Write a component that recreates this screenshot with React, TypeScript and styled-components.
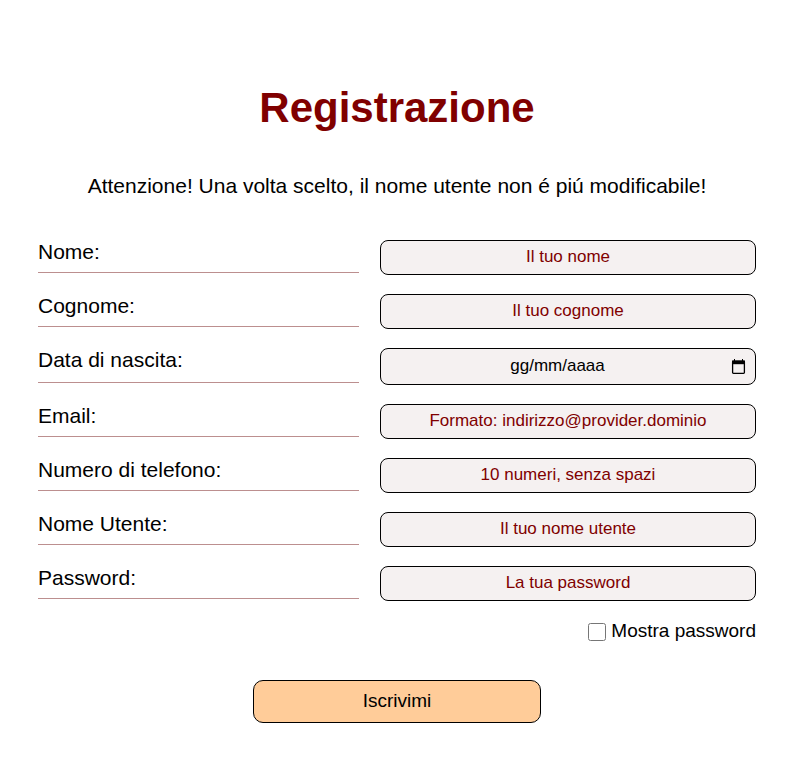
import React, { useState } from "react";
import styled, { createGlobalStyle, css } from "styled-components";

const GlobalStyle = createGlobalStyle`
  *, *::before, *::after {
    box-sizing: border-box;
  }

  body {
    margin: 0;
    background: #ffffff;
    color: #000000;
    font-family: "Liberation Sans", Arial, sans-serif;
    font-size: 21px;
    line-height: 24px;
  }
`;

const Page = styled.main`
  padding: 84px 34px 48px 38px;
`;

const Title = styled.h1`
  margin: 0;
  color: #800000;
  font-size: 42px;
  line-height: 48px;
  text-align: center;
`;

const Notice = styled.p`
  margin: 42px 0 0;
  text-align: center;
`;

const Form = styled.form`
  display: flex;
  flex-direction: column;
  margin-top: 42px;
`;

const Fields = styled.div`
  display: flex;
  flex-direction: column;
  gap: 19px;
`;

const Row = styled.div`
  display: grid;
  grid-template-columns: 321fr 376fr;
  column-gap: 21px;
`;

const Label = styled.label`
  margin-bottom: 2px;
  padding-bottom: 8px;
  border-bottom: 1px solid #bc8f8f;
`;

const Box = styled.div<{ $tall?: boolean }>`
  display: flex;
  align-items: center;
  height: ${({ $tall }) => ($tall ? 37 : 35)}px;
  border: 1px solid #000000;
  border-radius: 8px;
  background: #f5f1f1;

  &:focus-within {
    border-color: #800000;
  }
`;

const Input = styled.input<{ $date?: boolean }>`
  flex: 1;
  min-width: 0;
  height: 100%;
  padding: 0 8px 2px;
  border: 0;
  outline: 0;
  background: transparent;
  color: #000000;
  font: inherit;
  font-size: 17px;
  text-align: center;

  &::placeholder {
    color: #800000;
    opacity: 1;
  }

  ${({ $date }) =>
    $date &&
    css`
      padding: 0 0 2px 4px;

      &::placeholder {
        color: #000000;
      }
    `}
`;

const CalendarButton = styled.button`
  display: flex;
  margin-right: 8px;
  padding: 0;
  border: 0;
  background: none;
  color: #000000;
  cursor: pointer;
`;

const ShowPassword = styled.label`
  display: flex;
  align-items: center;
  align-self: flex-end;
  gap: 5px;
  margin-top: 18px;
  font-size: 19px;
`;

const Checkbox = styled.input`
  width: 18px;
  height: 18px;
  margin: 2px 0 0;
`;

const Submit = styled.button`
  align-self: center;
  width: 40%;
  height: 43px;
  margin-top: 37px;
  padding: 0 8px 2px;
  border: 1px solid #000000;
  border-radius: 10px;
  background: #ffcc99;
  color: #000000;
  font: inherit;
  font-size: 19px;
  cursor: pointer;
`;

type Field = { id: string; label: string; hint: string; type: string };

const fields: Field[] = [
  { id: "nome", label: "Nome:", hint: "Il tuo nome", type: "text" },
  { id: "cognome", label: "Cognome:", hint: "Il tuo cognome", type: "text" },
  { id: "nascita", label: "Data di nascita:", hint: "gg/mm/aaaa", type: "date" },
  { id: "email", label: "Email:", hint: "Formato: indirizzo@provider.dominio", type: "email" },
  { id: "telefono", label: "Numero di telefono:", hint: "10 numeri, senza spazi", type: "tel" },
  { id: "utente", label: "Nome Utente:", hint: "Il tuo nome utente", type: "text" },
  { id: "password", label: "Password:", hint: "La tua password", type: "password" },
];

function CalendarIcon() {
  return (
    <svg width="17" height="17" viewBox="0 0 17 17" fill="none" aria-hidden="true">
      <path d="M4.5 1v2M12.5 1v2" stroke="currentColor" strokeWidth="1" />
      <path d="M2 2.6h13v3.6H2z" fill="currentColor" />
      <rect x="2.6" y="3.1" width="11.8" height="12.2" rx="0.8" stroke="currentColor" strokeWidth="1.3" />
    </svg>
  );
}

export default function App() {
  const [visible, setVisible] = useState(false);

  return (
    <Page>
      <GlobalStyle />
      <Title>Registrazione</Title>
      <Notice>Attenzione! Una volta scelto, il nome utente non é piú modificabile!</Notice>
      <Form onSubmit={(event) => event.preventDefault()}>
        <Fields>
          {fields.map(({ id, label, hint, type }) => {
            const isDate = type === "date";
            const inputType = isDate || (type === "password" && visible) ? "text" : type;
            return (
              <Row key={id}>
                <Label htmlFor={id}>{label}</Label>
                <Box $tall={isDate}>
                  <Input id={id} name={id} type={inputType} placeholder={hint} $date={isDate} />
                  {isDate && (
                    <CalendarButton type="button" aria-label="Apri il calendario">
                      <CalendarIcon />
                    </CalendarButton>
                  )}
                </Box>
              </Row>
            );
          })}
        </Fields>
        <ShowPassword>
          <Checkbox
            type="checkbox"
            checked={visible}
            onChange={(event) => setVisible(event.target.checked)}
          />
          Mostra password
        </ShowPassword>
        <Submit type="submit">Iscrivimi</Submit>
      </Form>
    </Page>
  );
}
